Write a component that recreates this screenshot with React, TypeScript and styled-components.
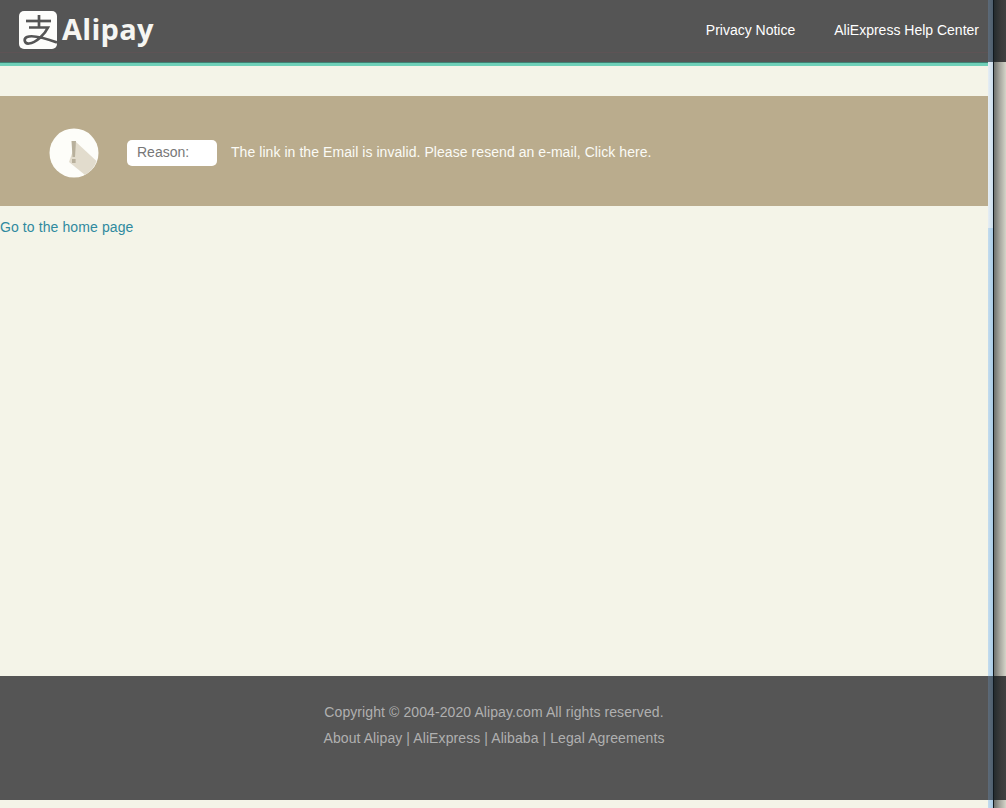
import React from "react";
import styled, { createGlobalStyle } from "styled-components";

const GlobalStyle = createGlobalStyle`
  html, body {
    margin: 0;
    padding: 0;
    overflow: hidden;
    background: #f4f4e8;
  }
  body {
    font-family: "Liberation Sans", Arial, sans-serif;
  }
`;

const Page = styled.div`
  display: flex;
  width: 1006px;
  height: 808px;
  overflow: hidden;
`;

const Main = styled.div`
  display: flex;
  flex-direction: column;
  width: 988px;
  height: 808px;
  background: #f4f4e8;
`;

const Header = styled.header`
  display: flex;
  align-items: center;
  justify-content: space-between;
  height: 62px;
  padding: 0 9px 1px 19px;
  background: linear-gradient(
    180deg,
    #555555 52px,
    #5e5355 52px,
    #5e5355 53px,
    #555555 53px,
    #555555 62px,
    #3f8274 62px
  );
  border-bottom: 3px solid #6fd0b8;
`;

const Brand = styled.div`
  display: flex;
  align-items: center;
  gap: 5px;
  margin-top: -2px;
`;

const BrandName = styled.span`
  margin-top: -3px;
  font-family: "Open Sans", sans-serif;
  font-size: 29px;
  font-weight: 700;
  line-height: 38px;
  letter-spacing: 0.3px;
  color: #f6f6f2;
`;

const HeaderNav = styled.nav`
  display: flex;
  gap: 39px;
  margin-top: -2px;
`;

const NavLink = styled.a`
  font-size: 14px;
  line-height: 16px;
  color: #ffffff;
  text-decoration: none;
`;

const Banner = styled.section`
  box-sizing: border-box;
  display: flex;
  align-items: center;
  height: 110px;
  margin-top: 30px;
  padding: 4px 0 0 49px;
  background: #baac8d;
`;

const ReasonTag = styled.span`
  box-sizing: border-box;
  width: 90px;
  height: 26px;
  margin-left: 28px;
  padding-left: 10px;
  background: #ffffff;
  border-radius: 5px;
  font-size: 14px;
  line-height: 25px;
  color: #777777;
`;

const ReasonText = styled.span`
  margin: -2px 0 0 14px;
  font-size: 14px;
  line-height: 25px;
  letter-spacing: 0.06px;
  color: #fbfbf6;
`;

const HomeLink = styled.a`
  align-self: flex-start;
  margin-top: 13px;
  font-size: 14px;
  line-height: 16px;
  letter-spacing: 0.1px;
  color: #2f8a9f;
  text-decoration: none;
`;

const Spacer = styled.div`
  flex: 1;
`;

const Footer = styled.footer`
  display: flex;
  flex-direction: column;
  align-items: center;
  height: 124px;
  margin-bottom: 8px;
  padding-top: 23px;
  box-sizing: border-box;
  background: #555555;
  font-size: 14px;
  line-height: 26px;
  letter-spacing: 0.09px;
  color: #b0b0b0;
`;

const FooterLine = styled.div``;

const Rail = styled.div`
  display: flex;
  flex-direction: column;
  width: 18px;
  height: 808px;
`;

const RailPart = styled.div<{ $height: number }>`
  display: flex;
  height: ${(p) => p.$height}px;
  flex: none;
`;

const edgeColors = {
  dark: "linear-gradient(90deg, #5d6a78, #4e5f6e)",
  pale: "linear-gradient(90deg, #e6eef4, #c9dcec)",
  blue: "linear-gradient(90deg, #c4dcee, #a9cbe6)",
};

const RailEdge = styled.div<{ $tone: keyof typeof edgeColors }>`
  width: 5px;
  background: ${(p) => edgeColors[p.$tone]};
`;

const RailLine = styled.div`
  width: 1px;
  background: #10181e;
`;

const RailShade = styled.div<{ $dark: boolean }>`
  flex: 1;
  background: ${(p) =>
    p.$dark
      ? "linear-gradient(90deg, #252b2d, #3b3b3b 60%, #404040)"
      : "linear-gradient(90deg, #6e716e, #a8a8a0 50%, #d4d4c8)"};
`;

const rail: { height: number; tone: keyof typeof edgeColors }[] = [
  { height: 62, tone: "dark" },
  { height: 166, tone: "pale" },
  { height: 448, tone: "blue" },
  { height: 124, tone: "dark" },
  { height: 8, tone: "blue" },
];

const AlipayMark = () => (
  <svg width="38" height="38" viewBox="0 0 38 38">
    <rect width="38" height="38" rx="5" fill="#fdfdfb" />
    <g fill="none" stroke="#555555" strokeWidth="2.7" strokeLinecap="butt">
      <path d="M7 10H32" />
      <path d="M20 4V16" />
      <path d="M10 16.5H29C26 23 17 32 10 32.5C5 33 4.5 27.5 8 26C14 23.5 27 27.5 38 31.5" />
    </g>
  </svg>
);

const AlertIcon = () => (
  <svg width="50" height="50" viewBox="0 0 50 50">
    <circle cx="25" cy="25" r="24.5" fill="#fdfdf9" />
    <path d="M27 14L47.5 33A24.5 24.5 0 0 1 36 47L20 34Z" fill="#e2dccd" />
    <path d="M22.5 13H27L26 29H23.5Z" fill="#b8b09c" />
    <rect x="23" y="31" width="3.6" height="4" fill="#b8b09c" />
  </svg>
);

export default function App() {
  return (
    <Page>
      <GlobalStyle />
      <Main>
        <Header>
          <Brand>
            <AlipayMark />
            <BrandName>Alipay</BrandName>
          </Brand>
          <HeaderNav>
            <NavLink href="#">Privacy Notice</NavLink>
            <NavLink href="#">AliExpress Help Center</NavLink>
          </HeaderNav>
        </Header>
        <Banner>
          <AlertIcon />
          <ReasonTag>Reason:</ReasonTag>
          <ReasonText>
            The link in the Email is invalid. Please resend an e-mail, Click
            here.
          </ReasonText>
        </Banner>
        <HomeLink href="#">Go to the home page</HomeLink>
        <Spacer />
        <Footer>
          <FooterLine>Copyright © 2004-2020 Alipay.com All rights reserved.</FooterLine>
          <FooterLine>About Alipay | AliExpress | Alibaba | Legal Agreements</FooterLine>
        </Footer>
      </Main>
      <Rail>
        {rail.map((part, i) => (
          <RailPart key={i} $height={part.height}>
            <RailEdge $tone={part.tone} />
            <RailLine />
            <RailShade $dark={part.tone === "dark"} />
          </RailPart>
        ))}
      </Rail>
    </Page>
  );
}
